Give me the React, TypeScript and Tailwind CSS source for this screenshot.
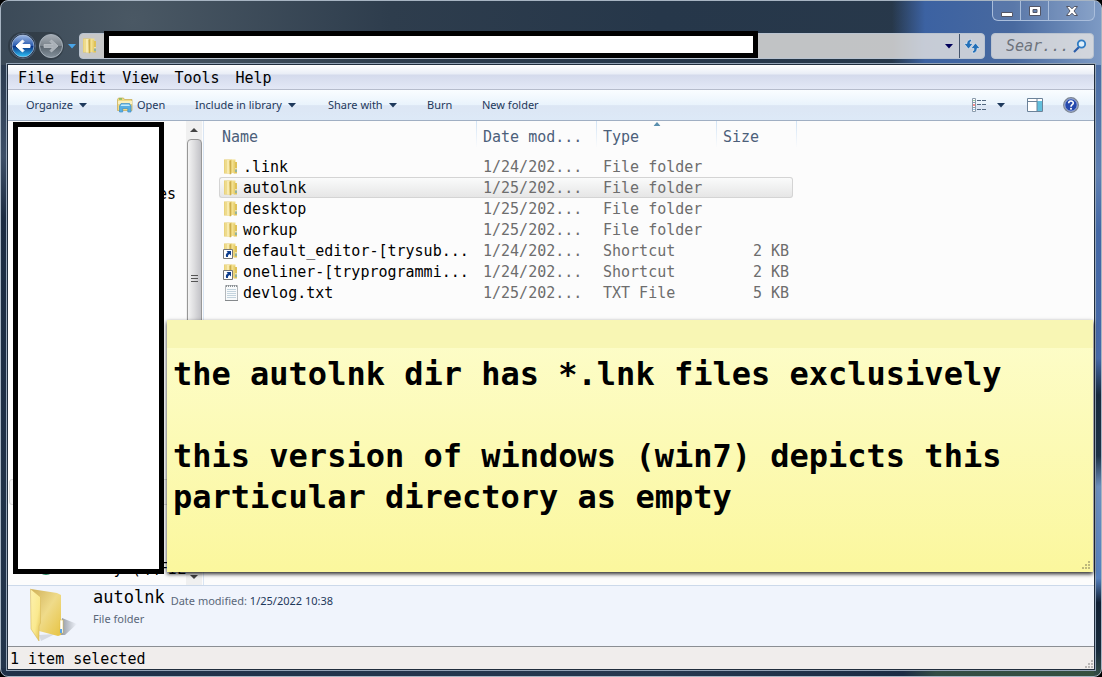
import React from 'react';

const mono = "font-['DejaVu_Sans_Mono','Liberation_Mono',monospace]";
const ui = "font-['Noto_Sans','Open_Sans',sans-serif]";

function FolderShape() {
  return (
    <>
      <path d="M8 .5h4.500v13H8z" fill="#f0dc88" />
      <path d="M11.500 3H14v11.500h-2.500z" fill="#dfc258" />
      <path d="M1 .5h7.500V14l-1.500 1.500-1-1H1z" fill="#e4ca69" />
      <path d="M1.500 1H4v13H1.500z" fill="#eedb8c" />
      <path d="M4 1h2.500v13.500H4z" fill="#f8ebb0" />
      <path d="M6.500 2L8.500 1v13.500L7 15.500z" fill="#cdae4b" />
      <path d="M8.500 1h2v13h-2z" fill="#f3e08f" />
      <path d="M10.500 2h1.500v12.500h-1.500z" fill="#e8cf70" />
      <path d="M12.500 9h1v1.500h-1z" fill="#fff" />
      <path d="M12.500 10.500h1V13h-1z" fill="#4aa3df" />
    </>
  );
}

function FolderIcon() {
  return (
    <svg width="16" height="16" viewBox="0 0 16 16" aria-hidden="true">
      <FolderShape />
    </svg>
  );
}

function ShortcutIcon() {
  return (
    <svg width="16" height="16" viewBox="0 0 16 16" aria-hidden="true">
      <FolderShape />
      <path d="M.5 6.500h9v9h-9z" fill="#fff" stroke="#777" />
      <path d="M3.500 8H8v4.500L6.500 11C5 12 4.800 12.800 5 14H3.200c-.8-2-.2-3.500 1.600-4.700z" fill="#0d3c8c" />
    </svg>
  );
}

function TextFileIcon() {
  return (
    <svg width="16" height="16" viewBox="0 0 16 16" aria-hidden="true">
      <path d="M2.500 .5h12v15h-12z" fill="#f8fafb" stroke="#b4b8bb" />
      <path d="M4 4.500h9M4 6.500h9M4 8.500h9M4 10.500h9M4 12.500h9" stroke="#c3d3dd" />
      <path d="M2 15.500h13" stroke="#85898c" />
      <path d="M3 1h11" stroke="#8b9094" strokeWidth="2" strokeDasharray="1 1" />
    </svg>
  );
}

function Caret() {
  return (
    <svg width="8" height="5" viewBox="0 0 8 5" aria-hidden="true">
      <path d="M0 0h8L4 4.500z" fill="#1e395b" />
    </svg>
  );
}

function Grip({ color }: { color: string }) {
  return (
    <svg width="10" height="10" viewBox="0 0 10 10" fill={color} aria-hidden="true">
      <path d="M7 1h2v2H7zM4 4h2v2H4zM7 4h2v2H7zM1 7h2v2H1zM4 7h2v2H4zM7 7h2v2H7z" />
    </svg>
  );
}

function CaptionButtons() {
  return (
    <div className="flex h-5 overflow-hidden rounded-b-md border border-t-0 border-[#a9bddb] bg-white/10">
      <button aria-label="Minimize" className="flex w-7 items-center justify-center border-r border-[#a9bddb]">
        <svg width="12" height="12" viewBox="0 0 12 12"><path d="M.5 7.500h11v4H.5z" fill="#fff" stroke="#535666" /></svg>
      </button>
      <button aria-label="Maximize" className="flex w-7 items-center justify-center border-r border-[#a9bddb]">
        <svg width="12" height="10" viewBox="0 0 12 10"><path fillRule="evenodd" d="M.5 .5h11v9H.5zM4 3.500v3h4v-3z" fill="#fff" stroke="#535666" /></svg>
      </button>
      <button aria-label="Close" className="flex w-[45px] items-center justify-center">
        <svg width="12" height="10" viewBox="0 0 12 10"><path d="M.5 .5h3.300L6 2.800 8.200 .5h3.300L8 5l3.500 4.500H8.200L6 7.200 3.800 9.500H.5L4 5z" fill="#fff" stroke="#535666" /></svg>
      </button>
    </div>
  );
}

function AddressRow() {
  return (
    <div className="mt-3 flex h-[26px] items-center px-px">
      <div className="flex w-[71px] shrink-0 items-center gap-1">
        <div className="flex rounded-full bg-black/20">
          <button aria-label="Back">
            <svg width="28" height="28" viewBox="0 0 28 28">
              <defs>
                <linearGradient id="back" x1="0" y1="0" x2="0" y2="1">
                  <stop offset="0" stopColor="#9db8e4" /><stop offset=".48" stopColor="#2b5cb0" />
                  <stop offset=".5" stopColor="#0a2d80" /><stop offset="1" stopColor="#2fc5fb" />
                </linearGradient>
              </defs>
              <circle cx="15" cy="14" r="12.500" fill="#14243c" stroke="#7e91a6" strokeWidth=".6" />
              <circle cx="15" cy="14" r="11" fill="url(#back)" stroke="#b9cbe4" strokeWidth=".7" />
              <path d="M8 14l6.500-6 1.500 1.500-2.800 3H22v3h-8.800l2.800 3-1.500 1.500z" fill="#fff" stroke="#fff" strokeLinejoin="round" />
            </svg>
          </button>
          <button aria-label="Forward">
            <svg width="28" height="28" viewBox="0 0 28 28">
              <defs>
                <linearGradient id="forward" x1="0" y1="0" x2="0" y2="1">
                  <stop offset="0" stopColor="#a6adb5" /><stop offset=".49" stopColor="#7b848c" />
                  <stop offset=".5" stopColor="#59636c" /><stop offset="1" stopColor="#84919c" />
                </linearGradient>
              </defs>
              <circle cx="15" cy="14" r="11.500" fill="url(#forward)" stroke="#a6b0ba" />
              <path d="M22 14l-6.500-6-1.500 1.500 2.800 3H8v3h8.800l-2.800 3 1.500 1.500z" fill="#a9b0b7" stroke="#c0c6cb" strokeWidth=".7" strokeLinejoin="round" />
            </svg>
          </button>
        </div>
        <button aria-label="Recent pages">
          <svg width="8" height="5" viewBox="0 0 8 5"><path d="M0 0h8L4 4.500z" fill="#49a5e8" /></svg>
        </button>
      </div>
      <div className="flex h-[26px] min-w-0 flex-1 items-stretch rounded-sm border border-[#b9c3d0] bg-[#e8e6e4]/80">
        <div className="flex w-6 items-center pl-0.5"><FolderIcon /></div>
        <input aria-label="Address" className="-mt-[3px] h-[27px] w-[654px] min-w-0 shrink border-[5px] border-black bg-white outline-none" />
        <button aria-label="Previous locations" className="ml-auto flex w-5 items-center justify-center">
          <svg width="8" height="5" viewBox="0 0 8 5"><path d="M0 0h8L4 4.500z" fill="#00005a" /></svg>
        </button>
        <button aria-label="Refresh" className="flex w-[25px] items-center justify-center border-l border-[#44546c]">
          <svg width="16" height="16" viewBox="0 0 16 16" fill="#2470b8" stroke="#fff" strokeWidth=".5">
            <path d="M7.500 1.500C4 1.500 3 3.500 3 5.500H0L4.500 11 9 5.500H6C6 4 6.500 3.300 7.500 3.300z" />
            <path d="M8.500 15c3.500 0 4.500-2 4.500-4.500h3L11.500 5 7 10.500h3c0 1.500-.5 2.700-1.500 2.700z" />
          </svg>
        </button>
      </div>
      <label className="ml-1.5 flex h-[26px] w-[103px] items-center rounded-sm border border-[#b9c3d0] bg-[#e8e6e4]/80 pl-3.5 pr-1.5">
        <input aria-label="Search" placeholder="Sear..." className={`w-0 min-w-0 flex-1 bg-transparent text-[15px] italic outline-none placeholder:text-[#6d737c] ${mono}`} />
        <svg width="14" height="14" viewBox="0 0 14 14" fill="none" aria-hidden="true">
          <path d="M6 8l-5 5" stroke="#2a5ca8" strokeWidth="2.200" />
          <circle cx="8.500" cy="5" r="3.700" fill="#dff0fb" stroke="#2f7cc4" strokeWidth="1.800" />
        </svg>
      </label>
    </div>
  );
}

function MenuBar() {
  return (
    <nav className={`flex h-[25px] items-center gap-4 border-b border-[#b6bccc] bg-[linear-gradient(#fff_0,#e9edf6_9px,#d4daec_10px,#e3e8f6_100%)] px-2.5 pt-0.5 text-[15px] text-black ${mono}`}>
      {['File', 'Edit', 'View', 'Tools', 'Help'].map((m) => <button key={m}>{m}</button>)}
    </nav>
  );
}

function Toolbar() {
  return (
    <div className={`flex h-[31px] items-center border-b border-[#a0afc3] bg-[linear-gradient(#fafdff_0,#e9f3fc_50%,#dce6f4_52%,#dde9f7_100%)] pl-[18px] pr-[15px] text-[11px] text-[#1e395b] ${ui}`}>
      <button className="flex w-[91px] items-center gap-1.5">Organize <Caret /></button>
      <button className="flex w-[78px] items-center gap-1">
        <svg width="16" height="16" viewBox="0 0 16 16" aria-hidden="true">
          <path d="M.5 2.500l1-1.500h5l1 1.500h7.500v11H.5z" fill="#f0da86" stroke="#c6a94f" strokeWidth=".7" />
          <path d="M2 1.500h3v1H2z" fill="#4cae50" />
          <path d="M1 4h14v3H1z" fill="#faf0bd" />
          <path d="M2.500 9l1.500-2.500h8.500L14 9v6h-3.200v-3.500H5.700V15H2.500z" fill="#58aee2" stroke="#3d8fc8" strokeWidth=".7" />
          <path d="M4.500 7.500h7.500L13 9H3.500z" fill="#c5ebfb" />
        </svg>
        Open
      </button>
      <button className="flex w-[133px] items-center gap-1.5 whitespace-nowrap">Include in library <Caret /></button>
      <button className="flex w-[99px] items-center gap-1.5">Share with <Caret /></button>
      <button className="w-[55px] text-left">Burn</button>
      <button className="whitespace-nowrap">New folder</button>
      <div className="ml-auto flex items-center">
        <button aria-label="Change your view" className="mr-2.5">
          <svg width="16" height="14" viewBox="0 0 16 14" fill="none">
            <path d="M1.500 .5h3v13h-3zM1.500 4.500h3M1.500 9.500h3" fill="#fff" stroke="#8b9bab" />
            <path d="M2.500 2.500h1" stroke="#338f41" /><path d="M2.500 7h1" stroke="#e22" strokeWidth="2" /><path d="M2.500 11.500h1" stroke="#38c" />
            <path d="M6 2.500h9M6 6.500h9M6 11.500h9" stroke="#536880" strokeDasharray="4 1" />
          </svg>
        </button>
        <button aria-label="More view options" className="mr-[22px]"><Caret /></button>
        <button aria-label="Show the preview pane" className="mr-5">
          <svg width="16" height="14" viewBox="0 0 16 14">
            <path d="M.5 .5h15v13H.5z" fill="#fff" stroke="#6b8299" />
            <path d="M10 3h5v10h-5z" fill="#62bfdc" /><path d="M1 3.500h9M10 1v12" stroke="#6b8299" />
          </svg>
        </button>
        <button aria-label="Get help">
          <svg width="16" height="16" viewBox="0 0 16 16">
            <circle cx="8" cy="8" r="7.200" fill="#2549ad" stroke="#7c8694" strokeWidth="1.500" />
            <circle cx="8" cy="8" r="6.200" fill="none" stroke="#d5def2" strokeWidth=".7" />
            <path d="M5.700 6.200C5.700 3.300 10.300 3.400 10.300 6 10.300 7.800 8 7.700 8 9.700" fill="none" stroke="#fff" strokeWidth="1.600" />
            <circle cx="8" cy="11.800" r="1" fill="#fff" />
          </svg>
        </button>
      </div>
    </div>
  );
}

type Item = { name: string; date: string; type: string; size?: string; kind: 'folder' | 'shortcut' | 'text'; selected?: boolean };

const items: Item[] = [
  { name: '.link', date: '1/24/202...', type: 'File folder', kind: 'folder' },
  { name: 'autolnk', date: '1/25/202...', type: 'File folder', kind: 'folder', selected: true },
  { name: 'desktop', date: '1/25/202...', type: 'File folder', kind: 'folder' },
  { name: 'workup', date: '1/25/202...', type: 'File folder', kind: 'folder' },
  { name: 'default_editor-[trysub...', date: '1/24/202...', type: 'Shortcut', size: '2 KB', kind: 'shortcut' },
  { name: 'oneliner-[tryprogrammi...', date: '1/24/202...', type: 'Shortcut', size: '2 KB', kind: 'shortcut' },
  { name: 'devlog.txt', date: '1/25/202...', type: 'TXT File', size: '5 KB', kind: 'text' },
];

const divider = 'border-r [border-image:linear-gradient(#cfe2f5,#fcfcfc)_1]';

function FileList() {
  return (
    <div className="min-w-0 flex-1 bg-[#fcfcfc] pl-[15px]">
      <table className={`table-fixed border-separate border-spacing-0 whitespace-pre text-left text-[15px] leading-[17px] ${mono}`}>
        <colgroup>
          <col className="w-[258px]" /><col className="w-[120px]" /><col className="w-[120px]" /><col className="w-[76px]" /><col className="w-1" />
        </colgroup>
        <thead>
          <tr className="h-[26px] text-[#4c607a] *:font-normal">
            <th className={`pl-[3px] pt-1.5 ${divider}`}>Name</th>
            <th className={`pl-1.5 pt-1.5 ${divider}`}>Date mod...</th>
            <th className={`relative pl-1.5 pt-1.5 ${divider}`}>
              Type
              <svg className="absolute left-1/2 top-px -translate-x-1/2" width="7" height="4" viewBox="0 0 7 4" aria-hidden="true">
                <path d="M3.500 0L7 4H0z" fill="#5a8fae" />
              </svg>
            </th>
            <th className="pl-1.5 pt-1.5">Size</th>
            <td className={divider} />
          </tr>
          <tr className="h-[9px]"><td colSpan={5} /></tr>
        </thead>
        <tbody>
          {items.map((it) => {
            const edge = it.selected ? 'border-[#d4d4d4] bg-linear-to-b from-[#fafbfb] to-[#e6e6e6]' : 'border-transparent';
            return (
              <tr key={it.name} className="h-[21px] text-[#6d6d6d]">
                <td className={`rounded-l-[3px] border-y border-l pl-[3px] text-black ${edge}`}>
                  <span className="flex items-center gap-1">
                    {it.kind === 'folder' && <FolderIcon />}
                    {it.kind === 'shortcut' && <ShortcutIcon />}
                    {it.kind === 'text' && <TextFileIcon />}
                    <span className="pt-0.5">{it.name}</span>
                  </span>
                </td>
                <td className={`border-y pl-1.5 pt-0.5 ${edge}`}>{it.date}</td>
                <td className={`border-y pl-1.5 pt-0.5 ${edge}`}>{it.type}</td>
                <td className={`rounded-r-[3px] border-y border-r pr-[3px] pt-0.5 text-right ${edge}`}>{it.size}</td>
              </tr>
            );
          })}
        </tbody>
      </table>
    </div>
  );
}

function NavigationPane() {
  return (
    <div className={`relative flex w-[196px] shrink-0 border-r border-[#d9e5f3] bg-[#fcfcfc] text-[15px] ${mono}`}>
      <div className="flex flex-1 flex-col pl-px pt-[63px] leading-[21px]">
        <span className="pr-2.5 text-right">es</span>
        <div className="mt-auto h-[26px] rounded-[3px] border border-[#d9d9d9] bg-[#f4f4f4]" />
        <div className="mb-[7px] mt-[53px] flex h-5 items-end justify-between pl-7">
          <svg width="17" height="17" viewBox="0 0 17 17" aria-hidden="true"><ellipse cx="9" cy="7" rx="8" ry="7" fill="#2e8b68" /></svg>
          <span className="whitespace-nowrap leading-[18px]">y (\\FIL</span>
        </div>
      </div>
      <div className="mr-px flex w-4 flex-col items-center bg-[#f0f0f0]">
        <svg width="16" height="18" viewBox="0 0 16 18" aria-hidden="true"><path d="M8 7l4 4H4z" fill="#444" /></svg>
        <div className="flex w-[15px] flex-1 items-center justify-center rounded-sm border border-[#979797] bg-linear-to-r from-[#f4f4f4] via-[#dcdcde] to-[#c2c2c7] pb-[150px]">
          <svg width="7" height="8" viewBox="0 0 7 8" aria-hidden="true"><path d="M0 .5h7M0 3.500h7M0 6.500h7" stroke="#555" /></svg>
        </div>
        <svg width="16" height="17" viewBox="0 0 16 17" aria-hidden="true"><path d="M4 7h8l-4 4z" fill="#444" /></svg>
      </div>
      <div className="absolute bottom-[11px] left-[5px] top-px w-[151px] border-[5px] border-black bg-white" />
    </div>
  );
}

function StickyNote() {
  return (
    <div className={`absolute bottom-[13px] left-[159px] right-px top-[199px] bg-linear-to-b from-[#fdfdcb] to-[#fbf79d] text-[32px] font-bold leading-[41px] text-black shadow-[0_2px_4px_rgba(0,0,0,0.85)] ${mono}`}>
      <div className="h-7 bg-[#f8f6b4]" />
      <div className="whitespace-pre px-1.5 pt-1.5">
        <p>the autolnk dir has *.lnk files exclusively</p>
        <p>&nbsp;</p>
        <p>this version of windows (win7) depicts this</p>
        <p>particular directory as empty</p>
      </div>
      <div className="absolute bottom-0.5 right-0.5"><Grip color="#bdb97c" /></div>
    </div>
  );
}

function DetailsPane() {
  return (
    <div className={`flex h-[61px] gap-[9px] border-t border-[#ccd9ea] bg-[#f0f4fc] pl-[21px] text-[11px] ${ui}`}>
      <svg width="55" height="60" viewBox="0 0 55 60" aria-hidden="true">
        <defs>
          <linearGradient id="front" x1="0" y1="0" x2="1" y2="1"><stop stopColor="#fdf1ae" /><stop offset=".6" stopColor="#fae98f" /><stop offset="1" stopColor="#dfbc4a" /></linearGradient>
          <linearGradient id="inside" x1="0" y1="0" x2="1" y2="1"><stop stopColor="#cfb05a" /><stop offset=".5" stopColor="#efdb8a" /><stop offset="1" stopColor="#e7c342" /></linearGradient>
          <linearGradient id="shade"><stop stopColor="#6c727b" stopOpacity=".7" /><stop offset="1" stopColor="#6c727b" stopOpacity="0" /></linearGradient>
        </defs>
        <path d="M32 49l1-17 15 6-12 11z" fill="url(#shade)" />
        <path d="M12 55l-2-6 16-1z" fill="#6c727b" opacity=".2" />
        <path d="M2 3l26 4 4 2v40l-3 1-19-5z" fill="url(#inside)" />
        <path d="M31 34h3v13h-3z" fill="#fff" stroke="#dcb93f" strokeWidth=".5" /><path d="M31 43h2v4h-2z" fill="#5aa5e8" />
        <path d="M1.500 3l10 8v26l-1.500 3v15l-8-12z" fill="url(#front)" stroke="#d7b95b" strokeWidth=".6" />
      </svg>
      <div className="flex flex-col">
        <div className="flex h-6 items-start gap-1.5">
          <span className={`text-[17px] leading-[23px] text-black ${mono}`}>autolnk</span>
          <span className="pt-1.5 leading-[18px] text-[#5a6779]">Date modified: <span className="text-[#1e395b]">1/25/2022 10:38</span></span>
        </div>
        <span className="leading-[18px] text-[#5a6779]">File folder</span>
      </div>
    </div>
  );
}

export default function App() {
  return (
    <div className="flex min-h-screen flex-col bg-black">
      <div className="flex flex-1 flex-col rounded-lg border border-[#a7b4c2] px-[6px] pb-[6px] [background:linear-gradient(#4a6da4_0,#5f80b2_18%,#4468a5_27%,#4569a8_48%,#182a3e_54%,#1d3247_64%,#6d8fbd_69%,#5580bd_84%,#101f33_88%,#182b3c_96%,#334d45_100%)_bottom_right/7px_calc(100%_-_64px)_no-repeat,linear-gradient(90deg,#1f3048_0,#26384f_60%,#1b2c44_82%,#334d45_85%,#36503f_100%)_bottom/100%_8px_no-repeat,linear-gradient(#2b3b50_0,#3d4f67_15%,#1c2c42_25%,#23354c_100%)_bottom_left/7px_calc(100%_-_64px)_no-repeat,linear-gradient(90deg,transparent_81%,#3c62a2_84%,#48699f_92%,#7d9ac4_100%),radial-gradient(circle_at_12%_3%,#4a5864_0,#2e3d4d_22%,#26374a_45%,#2a3a4b_100%)]">
        <header className="flex flex-col">
          <div className="flex justify-end"><CaptionButtons /></div>
          <AddressRow />
        </header>
        <main className="mt-[5px] flex flex-1 flex-col border border-[#202d3d] outline outline-[#94a4b7]">
          <MenuBar />
          <Toolbar />
          <section className="relative flex flex-1">
            <NavigationPane />
            <FileList />
            <StickyNote />
          </section>
          <DetailsPane />
          <footer className={`flex h-[23px] items-center justify-between border-t border-[#8b8e93] bg-[#f0edec] pl-0.5 text-[15px] text-black ${mono}`}>
            <span className="pt-0.5">1 item selected</span>
            <span className="self-end"><Grip color="#bab7b6" /></span>
          </footer>
        </main>
      </div>
    </div>
  );
}
